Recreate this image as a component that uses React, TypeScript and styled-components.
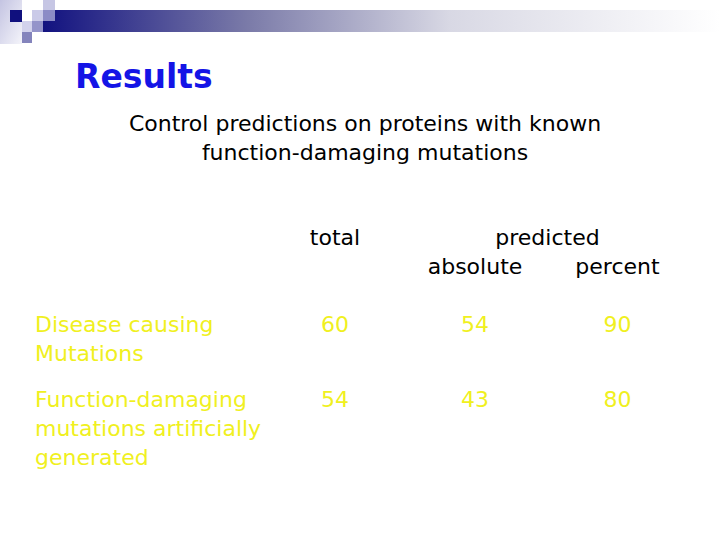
import React from 'react';
import styled, { createGlobalStyle } from 'styled-components';

const GlobalStyle = createGlobalStyle`
  html, body {
    margin: 0;
    padding: 0;
    background: #ffffff;
  }
  body {
    font-family: "DejaVu Sans", "Liberation Sans", sans-serif;
  }
`;

const Slide = styled.div`
  width: 720px;
  height: 540px;
  background: #ffffff;
  overflow: hidden;
`;

const Banner = styled.svg`
  display: block;
  width: 720px;
  height: 44px;
`;

const Title = styled.h1`
  margin: 13px 0 0 0;
  padding-left: 75px;
  font-size: 33px;
  line-height: 40px;
  font-weight: 700;
  color: #1414e6;
`;

const Subtitle = styled.p`
  margin: 12px 0 0 0;
  padding-left: 10px;
  text-align: center;
  font-size: 22px;
  line-height: 29px;
  color: #000000;
`;

const Table = styled.div`
  margin-top: 56px;
  padding-left: 35px;
`;

const Row = styled.div<{ $gap?: number }>`
  display: grid;
  grid-template-columns: 230px 140px 140px 145px;
  margin-top: ${p => p.$gap ?? 0}px;
  font-size: 22px;
  line-height: 29px;
`;

const Cell = styled.div<{ $tone: 'head' | 'data'; $center?: boolean; $span?: number }>`
  color: ${p => (p.$tone === 'head' ? '#000000' : '#f0f020')};
  text-align: ${p => (p.$center ? 'center' : 'left')};
  white-space: nowrap;
  grid-column: span ${p => p.$span ?? 1};
`;

const Decoration: React.FC = () => (
  <Banner viewBox="0 0 720 44">
    <defs>
      <linearGradient id="bar" x1="0" x2="1" y1="0" y2="0">
        <stop offset="0" stopColor="#121280" />
        <stop offset="0.3" stopColor="#7a7aa8" />
        <stop offset="0.6" stopColor="#d8d8e4" />
        <stop offset="1" stopColor="#ffffff" />
      </linearGradient>
      <linearGradient id="side" x1="0" x2="1" y1="0" y2="1">
        <stop offset="0" stopColor="#c4c4e2" />
        <stop offset="1" stopColor="#f4f4fa" />
      </linearGradient>
    </defs>
    <rect x="0" y="0" width="22" height="44" fill="url(#side)" />
    <rect x="43" y="10" width="677" height="22" fill="url(#bar)" />
    <rect x="10" y="10" width="12" height="12" fill="#10107e" />
    <rect x="32" y="10" width="11" height="11" fill="#cacae8" />
    <rect x="43" y="0" width="12" height="10" fill="#c6c6e4" />
    <rect x="43" y="10" width="12" height="11" fill="#8c8cc6" />
    <rect x="22" y="21" width="10" height="11" fill="#d2d2ec" />
    <rect x="32" y="21" width="11" height="11" fill="#9494ca" />
    <rect x="22" y="32" width="10" height="11" fill="#8484bc" />
  </Banner>
);

const rows = [
  { label: ['Disease causing', 'Mutations'], total: '60', absolute: '54', percent: '90', gap: 29 },
  { label: ['Function-damaging', 'mutations artificially', 'generated'], total: '54', absolute: '43', percent: '80', gap: 17 },
];

const App: React.FC = () => {
  return (
    <>
      <GlobalStyle />
      <Slide>
        <Decoration />
        <Title>Results</Title>
        <Subtitle>
          Control predictions on proteins with known
          <br />
          function-damaging mutations
        </Subtitle>
        <Table>
          <Row>
            <Cell $tone="head" />
            <Cell $tone="head" $center>total</Cell>
            <Cell $tone="head" $center $span={2}>predicted</Cell>
          </Row>
          <Row>
            <Cell $tone="head" />
            <Cell $tone="head" />
            <Cell $tone="head" $center>absolute</Cell>
            <Cell $tone="head" $center>percent</Cell>
          </Row>
          {rows.map(r => (
            <Row key={r.total + r.percent} $gap={r.gap}>
              <Cell $tone="data">
                {r.label.map((l, i) => (
                  <div key={i}>{l}</div>
                ))}
              </Cell>
              <Cell $tone="data" $center>{r.total}</Cell>
              <Cell $tone="data" $center>{r.absolute}</Cell>
              <Cell $tone="data" $center>{r.percent}</Cell>
            </Row>
          ))}
        </Table>
      </Slide>
    </>
  );
};

export default App;
